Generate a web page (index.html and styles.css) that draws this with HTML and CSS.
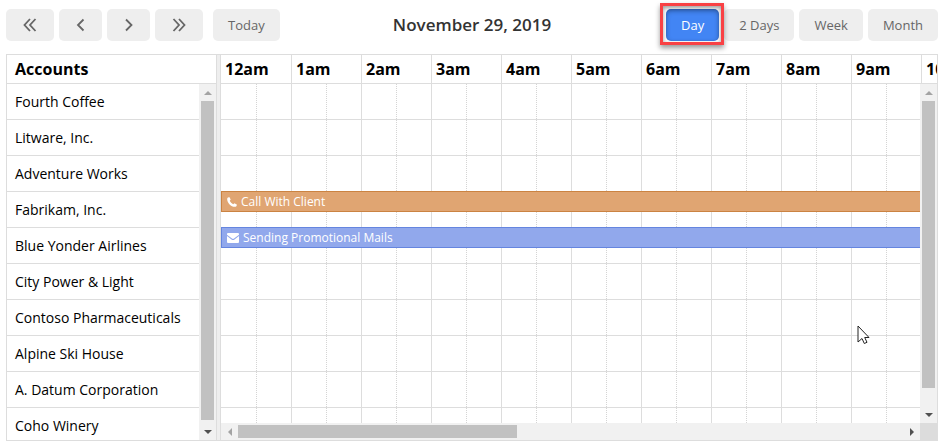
FILE: index.html
```html
<!DOCTYPE html>
<html lang="en">
<head>
    <meta charset="UTF-8">
    <meta name="viewport" content="width=device-width, initial-scale=1.0">
    <title>Accounts Calendar</title>
    <link rel="stylesheet" href="styles.css">
</head>
<body>
    <div class="toolbar">
        <div class="btn-group">
            <button class="btn btn-wide" aria-label="Previous page">
                <svg width="18" height="16" viewBox="0 0 18 16"><path d="M9 2 3.500 8 9 14M14.500 2 9 8l5.500 6"/></svg>
            </button>
            <button class="btn btn-arrow" aria-label="Previous day">
                <svg width="16" height="16" viewBox="0 0 16 16"><path d="M10.500 2.500 5 8l5.500 5.500"/></svg>
            </button>
            <button class="btn btn-arrow" aria-label="Next day">
                <svg width="16" height="16" viewBox="0 0 16 16"><path d="M5 2.500 10.500 8 5 13.500"/></svg>
            </button>
            <button class="btn btn-wide" aria-label="Next page">
                <svg width="18" height="16" viewBox="0 0 18 16"><path d="M3.500 2 9 8l-5.500 6M9 2l5.500 6L9 14"/></svg>
            </button>
            <button class="btn btn-today">Today</button>
        </div>
        <h2 class="title">November 29, 2019</h2>
        <div class="btn-group views">
            <div class="marked"><button class="btn btn-active">Day</button></div>
            <button class="btn">2 Days</button>
            <button class="btn">Week</button>
            <button class="btn">Month</button>
        </div>
    </div>

    <div class="scheduler">
        <div class="accounts">
            <div class="head">Accounts</div>
            <div class="pane">
                <ul class="account-list">
                    <li>Fourth Coffee</li>
                    <li>Litware, Inc.</li>
                    <li>Adventure Works</li>
                    <li>Fabrikam, Inc.</li>
                    <li>Blue Yonder Airlines</li>
                    <li>City Power &amp; Light</li>
                    <li>Contoso Pharmaceuticals</li>
                    <li>Alpine Ski House</li>
                    <li>A. Datum Corporation</li>
                    <li>Coho Winery</li>
                </ul>
                <div class="vscroll">
                    <span class="arrow arrow-up"></span>
                    <div class="track"><div class="thumb"></div></div>
                    <span class="arrow arrow-down"></span>
                </div>
            </div>
        </div>
        <div class="splitter"></div>
        <div class="timeline">
            <div class="head hours" id="hours"></div>
            <div class="pane">
                <div class="rows" id="rows"></div>
                <div class="vscroll">
                    <span class="arrow arrow-up"></span>
                    <div class="track"><div class="thumb thumb-rows"></div></div>
                    <span class="arrow arrow-down"></span>
                </div>
            </div>
            <div class="hscroll">
                <span class="arrow arrow-left"></span>
                <div class="htrack"><div class="hthumb"></div></div>
                <span class="arrow arrow-right"></span>
                <div class="corner"></div>
            </div>
        </div>
        <svg class="cursor" width="13" height="20" viewBox="0 0 13 20"><path d="M1 1v16l4-3.500 2.300 5 2.700-1.200-2.300-4.800H12z"/></svg>
    </div>

    <script>
        const icons = {
            phone: '<svg width="10" height="10" viewBox="0 0 10 10"><path d="M2.300 0 0.600 0.800C-0.600 2.500 0.800 5.600 2.600 7.400S7.500 10.600 9.200 9.400L10 7.700 7.500 6.300 6.200 7.200C4.800 6.700 3.300 5.200 2.800 3.800L3.700 2.500z"/></svg>',
            mail: '<svg width="12" height="10" viewBox="0 0 12 10"><path d="M1 0h10a1 1 0 0 1 1 1v.8L7 5.600q-1 .8-2 0L0 1.800V1a1 1 0 0 1 1-1zM0 3l4.500 3.500q1.500 1 3 0L12 3v6a1 1 0 0 1-1 1H1a1 1 0 0 1-1-1z"/></svg>'
        };
        const events = {
            3: { text: 'Call With Client', icon: 'phone', type: 'call' },
            4: { text: 'Sending Promotional Mails', icon: 'mail', type: 'email' }
        };
        const hoursShown = 11;
        const hours = document.getElementById('hours');
        const rows = document.getElementById('rows');

        for (let h = 0; h < hoursShown; h++) {
            hours.innerHTML += `<div class="hour">${h % 12 || 12}${h < 12 ? 'am' : 'pm'}</div>`;
        }

        document.querySelectorAll('.account-list li').forEach((item, index) => {
            const event = events[index];
            const bar = event ? `<div class="event event-${event.type}">${icons[event.icon]}${event.text}</div>` : '';
            rows.innerHTML += `<div class="row">${'<div class="slot"></div>'.repeat(hoursShown)}${bar}</div>`;
        });
    </script>
</body>
</html>
```
FILE: styles.css
```css
* {
    box-sizing: border-box;
}

body {
    font-family: "Open Sans", sans-serif;
    background-color: #fff;
    color: #000;
    margin: 0;
    padding: 9px 4px 3px 6px;
    font-size: 14px;
}

.toolbar {
    display: grid;
    grid-template-columns: 1fr auto 1fr;
    align-items: center;
    margin-bottom: 13px;
}

.btn-group {
    display: flex;
    gap: 5px;
}

.views {
    justify-content: flex-end;
}

.title {
    margin: 0;
    font-size: 17px;
    font-weight: 600;
    line-height: 24px;
    color: #333;
}

.btn {
    height: 32px;
    padding: 0 15px;
    border: none;
    border-radius: 5px;
    background: #eee;
    color: #666;
    font-family: inherit;
    font-size: 13px;
    cursor: pointer;
}

.btn:hover {
    background: #e4e4e4;
}

.btn svg {
    display: block;
    margin: 0 auto;
    fill: none;
    stroke: #666;
    stroke-width: 1.800;
}

.btn-wide {
    width: 48px;
    padding: 0;
}

.btn-arrow {
    width: 43px;
    padding: 0;
}

.btn-today {
    margin-left: 5px;
}

.btn-active,
.btn-active:hover {
    background: #4285f4;
    color: #fff;
    box-shadow: inset 0 2px 5px rgba(0, 0, 0, 0.3);
}

/* red frame round the current view */
.marked {
    position: relative;
}

.marked::after {
    content: "";
    position: absolute;
    inset: -6px -5px -4px -6px;
    border: 3px solid #f94144;
    box-shadow: 0 3px 5px rgba(0, 0, 0, 0.4), inset 0 2px 4px rgba(0, 0, 0, 0.4);
    pointer-events: none;
}

.scheduler {
    position: relative;
    display: flex;
    border: 1px solid #ddd;
}

.accounts {
    width: 209px;
    flex-shrink: 0;
}

.splitter {
    width: 5px;
    flex-shrink: 0;
    background: #eee;
    border: solid #ddd;
    border-width: 0 1px;
}

.timeline {
    flex: 1;
    min-width: 0;
    display: flex;
    flex-direction: column;
}

.head {
    height: 29px;
    padding-left: 8px;
    border-bottom: 1px solid #ddd;
    font-size: 16px;
    font-weight: bold;
    line-height: 28px;
}

.hours {
    display: flex;
    padding-left: 0;
    overflow: hidden;
}

.hour {
    flex: 0 0 70px;
    padding-left: 4px;
    border-left: 1px solid #ddd;
}

.hour:first-child {
    border-left: none;
}

.slot:first-child {
    border-left-color: transparent;
}

.pane {
    display: flex;
    max-height: 356px;
    overflow: hidden;
}

.timeline .pane {
    flex: 1;
    max-height: 339px;
}

.account-list {
    flex: 1;
    margin: 0;
    padding: 0;
    list-style: none;
}

.account-list li {
    height: 36px;
    padding-left: 8px;
    border-bottom: 1px solid #ddd;
    line-height: 35px;
    white-space: nowrap;
}

.rows {
    flex: 1;
    min-width: 0;
    overflow: hidden;
}

.row {
    position: relative;
    display: flex;
    height: 36px;
    border-bottom: 1px solid #ddd;
}

.slot {
    flex: 0 0 70px;
    border-left: 1px solid #ddd;
}

/* half hour line */
.slot::before {
    content: "";
    display: block;
    box-sizing: border-box;
    width: 35px;
    height: 100%;
    border-right: 1px dotted #d4d4d4;
}

.event {
    position: absolute;
    top: -1px;
    left: 0;
    right: 0;
    height: 21px;
    display: flex;
    align-items: center;
    gap: 4px;
    padding-left: 5px;
    border: 1px solid;
    border-right: none;
    color: #fff;
    font-size: 12px;
    line-height: 19px;
}

.event svg {
    fill: #fff;
}

.event-call {
    background: #e0a572;
    border-color: #cb8342;
}

.event-email {
    background: #91a8ec;
    border-color: #6585df;
}

/* scrollbars */
.vscroll {
    width: 17px;
    flex-shrink: 0;
    display: flex;
    flex-direction: column;
    background: #f1f1f1;
}

.track {
    flex: 1;
    padding: 0 2px;
}

.thumb {
    height: 99%;
    background: #c1c1c1;
}

.thumb-rows {
    height: 94%;
}

.hscroll {
    display: flex;
    height: 17px;
    background: #f1f1f1;
}

.htrack {
    flex: 1;
    padding: 2px 0;
}

.hthumb {
    width: 42%;
    height: 100%;
    background: #c1c1c1;
}

.corner {
    width: 17px;
    background: #dcdcdc;
}

.arrow {
    width: 17px;
    height: 17px;
    display: flex;
    flex-shrink: 0;
    align-items: center;
    justify-content: center;
}

.arrow::before {
    content: "";
    border: 4px solid transparent;
}

.arrow-up::before {
    border-top: none;
    border-bottom-color: #a3a3a3;
}

.arrow-down::before {
    border-bottom: none;
    border-top-color: #505050;
}

.arrow-left::before {
    border-left: none;
    border-right-color: #a3a3a3;
}

.arrow-right::before {
    border-right: none;
    border-left-color: #505050;
}

.cursor {
    position: absolute;
    right: 67px;
    bottom: 95px;
    fill: #fff;
    stroke: #222;
    pointer-events: none;
}
```
